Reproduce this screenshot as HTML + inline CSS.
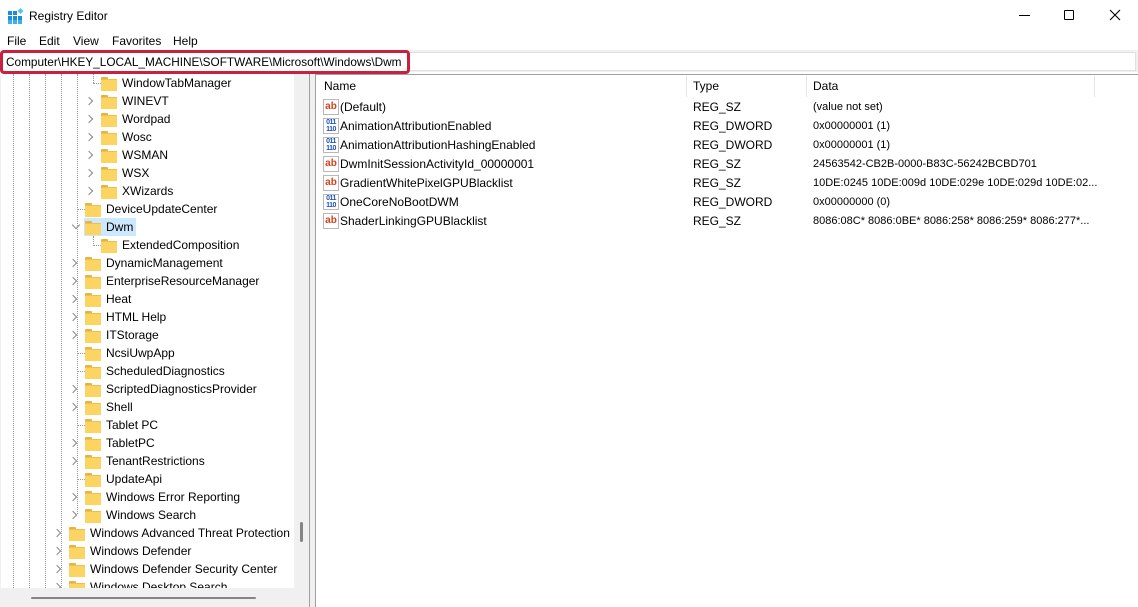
<!DOCTYPE html>
<html><head><meta charset="utf-8"><style>
*{margin:0;padding:0;box-sizing:border-box}
body{width:1138px;height:607px;overflow:hidden;background:#fff;font-family:"Liberation Sans",sans-serif;font-size:12px;color:#000;position:relative}
.a{position:absolute;white-space:nowrap}
.fold{position:absolute;width:16px;height:13px}
.fold:before{content:"";position:absolute;left:0;top:0;width:7px;height:3px;background:#e6b443;border-radius:1px 1px 0 0}
.fold:after{content:"";position:absolute;left:0;top:2px;width:16px;height:11px;background:#fcd462;border-top:1px solid #f0be4a}
.chev{position:absolute;width:6px;height:6px;border-right:1px solid #8a8a8a;border-bottom:1px solid #8a8a8a;transform:rotate(-45deg)}
.vl{position:absolute;width:1px;border-left:1px dotted #9a9a9a}
.hl{position:absolute;height:1px;border-top:1px dotted #9a9a9a;width:8px}
.ic{position:absolute;width:16px;height:16px;border:1px solid #b8b8b8;background:#fff;font-size:10px;font-weight:bold;line-height:13px;text-align:center}
</style></head><body>
<svg class="a" style="left:8px;top:8px" width="16" height="16" viewBox="0 0 16 16">
<g fill="#1a8fd8"><rect x="0" y="3" width="4" height="4"/><rect x="5" y="3" width="4" height="4"/><rect x="0" y="8" width="4" height="4"/><rect x="5" y="8" width="4" height="4"/><rect x="10" y="8" width="4" height="4"/><rect x="0" y="12" width="4" height="4" fill="#3ab0f0"/><rect x="5" y="12" width="4" height="4" fill="#3ab0f0"/><rect x="10" y="12" width="4" height="4" fill="#3ab0f0"/></g>
<path d="M12.5 0 L15.5 3 L12.5 6 L9.5 3Z" fill="#5bc0f5"/></svg>
<div class="a" style="left:29px;top:9px;font-size:12px">Registry Editor</div>
<div class="a" style="left:1019px;top:15px;width:11px;height:1px;background:#000"></div>
<div class="a" style="left:1064px;top:10px;width:10px;height:10px;border:1px solid #000;border-radius:1px"></div>
<svg class="a" style="left:1109px;top:9px" width="12" height="12"><path d="M1 1L11 11M11 1L1 11" stroke="#000" stroke-width="1.1"/></svg>
<div class="a" style="left:7px;top:34px">File</div>
<div class="a" style="left:39px;top:34px">Edit</div>
<div class="a" style="left:73px;top:34px">View</div>
<div class="a" style="left:112px;top:34px">Favorites</div>
<div class="a" style="left:173px;top:34px">Help</div>
<div class="a" style="left:0;top:50px;width:1138px;height:22px;background:#f0f0f0"></div>
<div class="a" style="left:2px;top:52px;width:1134px;height:19px;background:#fff;border:1px solid #e0e0e0"></div>
<div class="a" style="left:0;top:50px;width:410px;height:24px;border:3px solid #c8203e;border-radius:4px;background:#fff"></div>
<div class="a" style="left:6px;top:55px;font-size:11.8px">Computer\HKEY_LOCAL_MACHINE\SOFTWARE\Microsoft\Windows\Dwm</div>
<div class="a" style="left:0;top:74px;width:1138px;height:533px;background:#f0f0f0"></div>
<div class="a" style="left:1px;top:74px;width:309px;height:533px;background:#f0f0f0;border-right:1px solid #a0a0a0"></div>
<div class="a" style="left:1px;top:74px;width:293px;height:514px;background:#fff;overflow:hidden">
<div class="vl" style="left:12px;top:0;height:514px"></div>
<div class="vl" style="left:28px;top:0;height:514px"></div>
<div class="vl" style="left:44px;top:0;height:514px"></div>
<div class="vl" style="left:60px;top:0;height:514px"></div>
<div class="vl" style="left:76px;top:0;height:440px"></div>
<div class="vl" style="left:92px;top:0;height:9px"></div>
<div class="vl" style="left:92px;top:162px;height:8px"></div>
</div>
<div class="a" style="left:300px;top:522px;width:3px;height:20px;background:#858585;border-radius:2px"></div>
<div class="a" style="left:31px;top:597px;width:225px;height:2px;background:#858585;border-radius:1px"></div>
<div class="a" style="left:315px;top:74px;width:823px;height:533px;background:#fff;border-left:1px solid #a0a0a0;border-top:1px solid #a0a0a0"></div>
<div class="a" style="left:686px;top:76px;width:1px;height:21px;background:#e5e5e5"></div>
<div class="a" style="left:806px;top:76px;width:1px;height:21px;background:#e5e5e5"></div>
<div class="a" style="left:1094px;top:76px;width:1px;height:21px;background:#e5e5e5"></div>
<div class="a" style="left:324px;top:79px">Name</div>
<div class="a" style="left:693px;top:79px">Type</div>
<div class="a" style="left:813px;top:79px">Data</div>
<div id="rows"></div>
<div id="titems"></div>
<script>
var t=[[2,"WindowTabManager",0],[2,"WINEVT",1],[2,"Wordpad",1],[2,"Wosc",1],[2,"WSMAN",1],[2,"WSX",1],[2,"XWizards",1],[1,"DeviceUpdateCenter",0],[1,"Dwm",2],[2,"ExtendedComposition",0],[1,"DynamicManagement",1],[1,"EnterpriseResourceManager",1],[1,"Heat",1],[1,"HTML Help",1],[1,"ITStorage",1],[1,"NcsiUwpApp",0],[1,"ScheduledDiagnostics",0],[1,"ScriptedDiagnosticsProvider",1],[1,"Shell",1],[1,"Tablet PC",0],[1,"TabletPC",1],[1,"TenantRestrictions",1],[1,"UpdateApi",0],[1,"Windows Error Reporting",1],[1,"Windows Search",1],[0,"Windows Advanced Threat Protection",1],[0,"Windows Defender",1],[0,"Windows Defender Security Center",1],[0,"Windows Desktop Search",1]];
var h="";
t.forEach(function(r,i){var y=74+i*18,lv=r[0],fx=69+lv*16;
if(y>588)return;
var hh=Math.min(18,588-y);
h+='<div class="a" style="left:0;top:'+y+'px;width:294px;height:'+hh+'px;overflow:hidden">';
if(r[2]==2){h+='<div class="a" style="left:'+(fx-1)+'px;top:0;width:52px;height:18px;background:#cce8ff"></div>';h+='<div class="chev" style="left:'+(fx-12)+'px;top:4px;transform:rotate(45deg)"></div>';}
else if(r[2]==1)h+='<div class="chev" style="left:'+(fx-15)+'px;top:6px"></div>';
else h+='<div class="hl" style="left:'+(fx-8)+'px;top:9px"></div>';
h+='<div class="fold" style="left:'+fx+'px;top:3px"></div><div class="a" style="left:'+(fx+21)+'px;top:2px">'+r[1]+'</div></div>';});
document.getElementById("titems").innerHTML=h;
var v=[["s","(Default)","REG_SZ","(value not set)"],["d","AnimationAttributionEnabled","REG_DWORD","0x00000001 (1)"],["d","AnimationAttributionHashingEnabled","REG_DWORD","0x00000001 (1)"],["s","DwmInitSessionActivityId_00000001","REG_SZ","24563542-CB2B-0000-B83C-56242BCBD701"],["s","GradientWhitePixelGPUBlacklist","REG_SZ","10DE:0245 10DE:009d 10DE:029e 10DE:029d 10DE:02..."],["d","OneCoreNoBootDWM","REG_DWORD","0x00000000 (0)"],["s","ShaderLinkingGPUBlacklist","REG_SZ","8086:08C* 8086:0BE* 8086:258* 8086:259* 8086:277*..."]];
var g="";v.forEach(function(r,i){var y=99+i*19;
g+=r[0]=="s"?'<div class="ic" style="left:323px;top:'+(y)+'px;color:#d8401a">ab</div>':'<div class="ic" style="left:323px;top:'+y+'px;color:#1a4fc0;font-size:7px;line-height:7px;letter-spacing:-0.5px">011<br>110</div>';
g+='<div class="a" style="left:340px;top:'+(y+1)+'px">'+r[1]+'</div><div class="a" style="left:693px;top:'+(y+1)+'px">'+r[2]+'</div><div class="a" style="left:813px;top:'+(y+2)+'px;font-size:11px">'+r[3]+'</div>';});
document.getElementById("rows").innerHTML=g;
</script>
</body></html>
